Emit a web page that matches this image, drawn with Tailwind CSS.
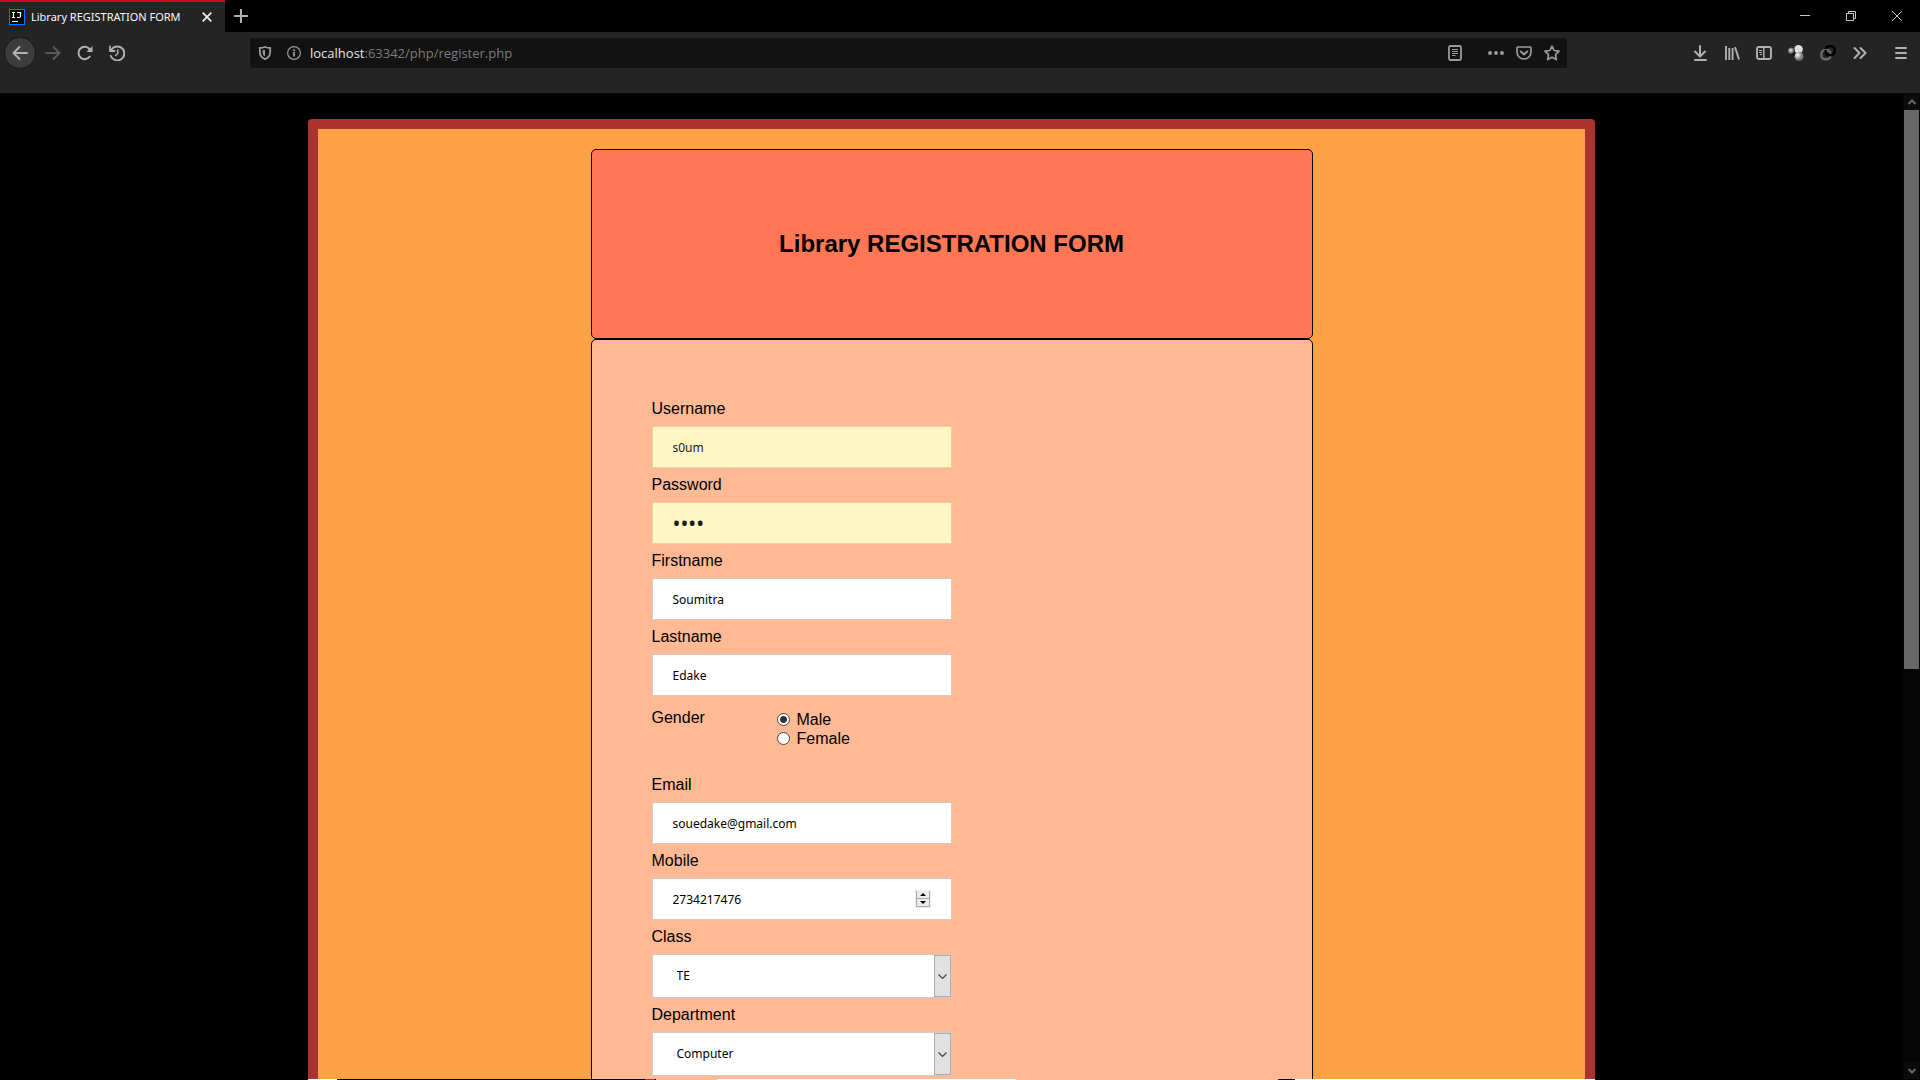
<!DOCTYPE html>
<html lang="en">
<head>
<meta charset="utf-8">
<meta name="viewport" content="width=device-width, initial-scale=1">
<title>Library REGISTRATION FORM</title>
<script src="https://cdn.jsdelivr.net/npm/@tailwindcss/browser@4"></script>
</head>
<body class="flex h-screen flex-col overflow-hidden bg-black font-['Open_Sans',sans-serif] text-[#b1b1b3]">

<!-- Tab strip and window controls -->
<header class="flex h-8 shrink-0 items-stretch bg-black">
  <div class="flex w-[225px] items-center border-t-2 border-[#d70022] bg-[#242424] pr-2 pl-[9px]">
    <svg class="size-4 shrink-0" viewBox="0 0 16 16" aria-hidden="true">
      <rect width="16" height="16" fill="#087cfa"/><rect x="1" y="1" width="14" height="14" fill="#050505"/>
      <path d="M3 3.500h3M4.500 3.500v5M3 8.500h3M8 3.500h3.500v3.500q0 1.500-1.500 1.500H8M3 12.500h6" fill="none" stroke="#fff" stroke-width="1.200"/>
    </svg>
    <span class="ml-1.5 flex-1 font-['Noto_Sans',sans-serif] text-[11px] whitespace-nowrap text-[#f9f9fa]">Library REGISTRATION FORM</span>
    <button class="flex size-5 items-center justify-center text-[#f0f0f0]" aria-label="Close tab">
      <svg class="size-2.5" viewBox="0 0 10 10" fill="none" stroke="currentColor" stroke-width="1.700"><path d="M.7.7l8.600 8.600M9.300.7L.7 9.300"/></svg>
    </button>
  </div>
  <button class="flex w-8 items-center justify-center" aria-label="New tab">
    <svg class="size-3.5" viewBox="0 0 14 14" fill="none" stroke="currentColor" stroke-width="2"><path d="M7 0v14M0 7h14"/></svg>
  </button>
  <div class="ml-auto flex text-[#c8c8c8]">
    <button class="flex w-[46px] items-center justify-center" aria-label="Minimize">
      <svg class="size-2.5" viewBox="0 0 10 10" stroke="currentColor"><path d="M0 4.500h10"/></svg>
    </button>
    <button class="flex w-[46px] items-center justify-center" aria-label="Restore">
      <svg class="size-2.5" viewBox="0 0 10 10" fill="none" stroke="currentColor"><path d="M.5 2.500h7v7h-7zM2.500 2.500v-2h7v7h-2"/></svg>
    </button>
    <button class="flex w-[46px] items-center justify-center" aria-label="Close">
      <svg class="size-2.5" viewBox="0 0 10 10" stroke="currentColor"><path d="M0 0l10 10M10 0L0 10"/></svg>
    </button>
  </div>
</header>

<!-- Navigation toolbar -->
<nav class="h-[61px] shrink-0 bg-[#242424] pt-[5px]">
  <div class="flex h-8 items-center pr-[3px] pl-1">
    <button class="mr-px flex size-8 items-center justify-center rounded-full border border-[#191919] bg-[#3d3d3d]" aria-label="Back">
      <svg class="size-4" viewBox="0 0 16 16" fill="none" stroke="currentColor" stroke-width="2" stroke-linecap="round" stroke-linejoin="round"><path d="M7.500 2L1.500 8l6 6M2 8h13"/></svg>
    </button>
    <button class="flex size-8 items-center justify-center text-[#5a5a5b]" aria-label="Forward">
      <svg class="size-4" viewBox="0 0 16 16" fill="none" stroke="currentColor" stroke-width="2" stroke-linecap="round" stroke-linejoin="round"><path d="M8.500 2l6 6-6 6M14 8H1"/></svg>
    </button>
    <button class="flex size-8 items-center justify-center" aria-label="Reload">
      <svg class="size-4" viewBox="0 0 16 16" fill="none" stroke="currentColor" stroke-width="2" stroke-linecap="round"><path d="M12.800 11.500A6.200 6.200 0 1 1 12.500 4"/><path d="M15.500 1v5.500a.5.5 0 0 1-.5.5H9.500z" fill="currentColor" stroke="none"/></svg>
    </button>
    <button class="flex size-8 items-center justify-center" aria-label="History">
      <svg class="size-4" viewBox="0 0 16 16" fill="none" stroke="currentColor" stroke-width="2" stroke-linecap="round" stroke-linejoin="round"><path d="M2.500 4.500A7 7 0 1 1 1.800 11"/><path d="M1 1.500V6h4.500" stroke-width="1.800"/><path d="M8.800 5v3.500L6.500 10.500" stroke-width="1.500"/></svg>
    </button>

    <div class="mx-[117px] flex h-[30px] flex-1 items-center rounded-xs bg-[#121212] pr-[7px] pl-2">
      <svg class="size-3.5 text-[#9a9a9b]" viewBox="0 0 14 14" fill="none" stroke="currentColor" stroke-width="1.800"><path d="M7 1Q9.500 1.800 12.200 2v4q0 5-5.200 7.200Q1.800 11 1.800 6V2Q4.500 1.800 7 1z"/><path d="M7 4v6.500Q4.500 9 4.500 6V4.200z" fill="currentColor" stroke="none"/></svg>
      <svg class="ml-[15px] size-3.5 text-[#9a9a9b]" viewBox="0 0 14 14" fill="none" stroke="currentColor" stroke-width="1.200"><circle cx="7" cy="7" r="6.400"/><path d="M7 6v4.500M7 3.200v1.800" stroke-width="1.800"/></svg>
      <div class="relative ml-[9px] flex-1">
        <div class="pointer-events-none absolute inset-0 text-[13px] leading-5 whitespace-nowrap text-[#7c7c7d]" aria-hidden="true"><span class="text-[#e6e6e8]">localhost</span>:63342/php/register.php</div>
        <input id="url" type="text" aria-label="Address" value="localhost:63342/php/register.php" class="block h-5 w-full text-[13px] text-transparent outline-none">
      </div>
      <div class="flex items-center gap-3.5 text-[#9a9a9b]">
        <button class="mr-3" aria-label="Reader view"><svg class="block h-4 w-3.5" viewBox="0 0 14 16" fill="none" stroke="currentColor"><rect x="1" y="1" width="12" height="14" rx="1.500" stroke-width="1.800"/><path d="M4 4.500h6M4 6.500h6M4 8.500h6M4 10.500h3.500"/></svg></button>
        <button aria-label="Page actions"><svg class="block size-4" viewBox="0 0 16 16" fill="currentColor"><circle cx="2" cy="8" r="2"/><circle cx="8" cy="8" r="2"/><circle cx="14" cy="8" r="2"/></svg></button>
        <button aria-label="Save to Pocket" class="-ml-0.5"><svg class="block size-4" viewBox="0 0 16 16" fill="none" stroke="currentColor" stroke-linecap="round" stroke-linejoin="round"><path d="M2 2h12q1 0 1 1v4q0 3-2 5t-5 2-5-2-2-5V3q0-1 1-1z" stroke-width="1.700"/><path d="M4.800 6.500L8 9.500l3.200-3" stroke-width="1.900"/></svg></button>
        <button aria-label="Bookmark this page" class="-ml-0.5"><svg class="block size-4" viewBox="0 0 16 16" fill="none" stroke="currentColor" stroke-width="1.700" stroke-linejoin="round"><path d="M8 1.200l2.100 4.300 4.900.7-3.500 3.400.8 5L8 12.300l-4.300 2.300.8-5L1 6.200l4.900-.7z"/></svg></button>
      </div>
    </div>

    <button class="flex size-8 items-center justify-center" aria-label="Downloads">
      <svg class="size-4" viewBox="0 0 16 16" fill="none" stroke="currentColor" stroke-width="2" stroke-linecap="round" stroke-linejoin="round"><path d="M8 1v10M3 6.500L8 11.500l5-5M3 15h11"/></svg>
    </button>
    <button class="flex size-8 items-center justify-center" aria-label="Library">
      <svg class="size-4" viewBox="0 0 16 16" fill="none" stroke="currentColor" stroke-width="1.900"><path d="M2 1v14M5.300 3v12M8.600 3v12M11 2l4 12.500"/></svg>
    </button>
    <button class="flex size-8 items-center justify-center" aria-label="Sidebars">
      <svg class="size-4" viewBox="0 0 16 16" fill="none" stroke="currentColor"><rect x="1" y="2" width="14" height="12" rx="2" stroke-width="1.900"/><path d="M7.800 2v12" stroke-width="1.500"/><path d="M3 5.500h3M3 7.500h3M4 9.500h2"/></svg>
    </button>
    <button class="flex size-8 items-center justify-center" aria-label="Molecule extension">
      <svg class="size-4" viewBox="0 0 16 16">
        <defs>
          <radialGradient id="ball" cx=".35" cy=".35"><stop offset="0" stop-color="#fff"/><stop offset="1" stop-color="#777"/></radialGradient>
          <radialGradient id="dark" cx=".4" cy=".4" r=".6"><stop offset="0" stop-color="#eee"/><stop offset="1" stop-color="#222"/></radialGradient>
        </defs>
        <circle cx="6" cy="7" r="3.500" fill="#050505"/>
        <circle cx="10.500" cy="4.300" r="4.300" fill="#e0e0e0"/><circle cx="11" cy="11.300" r="4.500" fill="url(#ball)"/><circle cx="3.500" cy="6" r="3.500" fill="url(#dark)"/>
      </svg>
    </button>
    <button class="flex size-8 items-center justify-center" aria-label="Link extension">
      <svg class="size-4" viewBox="0 0 16 16" fill="none" stroke-width="2.400"><rect x="5.500" y="1.300" width="9.200" height="8.700" rx="3.500" stroke="#000"/><rect x="1.300" y="5.300" width="9.200" height="9" rx="3.500" stroke="#69696b"/><path d="M5.500 5v1.500q0 3.500 3 3.500h3.500" stroke="#000"/></svg>
    </button>
    <button class="flex size-8 items-center justify-center" aria-label="More tools">
      <svg class="size-4" viewBox="0 0 16 16" fill="none" stroke="currentColor" stroke-width="2" stroke-linecap="round" stroke-linejoin="round"><path d="M2.500 3l5 5-5 5M8.500 3l5 5-5 5"/></svg>
    </button>
    <button class="ml-[9px] flex size-8 items-center justify-center" aria-label="Menu">
      <svg class="size-4" viewBox="0 0 16 16" stroke="currentColor" stroke-width="2" stroke-linecap="round"><path d="M3 3h10M3 8h10M3 13h10"/></svg>
    </button>
  </div>
</nav>

<!-- Page content -->
<div class="flex min-h-0 flex-1">
  <main class="flex-1 overflow-y-auto px-[308px] pt-[26px] font-['Liberation_Sans',Arial,sans-serif] text-base leading-[18px] text-black [scrollbar-width:none]">
    <div class="rounded border-[10px] border-[#ac322f] bg-[#ffa245] py-5">
      <div class="mx-auto max-w-[722px]">
        <div class="flex h-[190px] items-center justify-center rounded-[5px] border border-black bg-[#ff7755]">
          <h1 class="text-2xl font-bold">Library REGISTRATION FORM</h1>
        </div>
        <form class="rounded-[5px] border border-black bg-[#ffb995] px-15 pt-15 pb-30">
          <div class="flex w-[300px] flex-col gap-2">
            <label for="username">Username</label>
            <input id="username" type="text" value="s0um" class="h-[42px] border border-[#e2d2a2] bg-[#fff5c5] px-5 font-['Noto_Sans',sans-serif] text-xs text-[#1c1b19] outline-none">
            <label for="password">Password</label>
            <input id="password" type="password" value="pass" class="h-[42px] border border-[#e2d2a2] bg-[#fff5c5] px-5 font-['Noto_Sans',sans-serif] text-[21px] text-[#1c1b19] outline-none">
            <label for="firstname">Firstname</label>
            <input id="firstname" type="text" value="Soumitra" class="h-[42px] border border-[#cccccc] bg-white px-5 font-['Noto_Sans',sans-serif] text-xs outline-none">
            <label for="lastname">Lastname</label>
            <input id="lastname" type="text" value="Edake" class="h-[42px] border border-[#cccccc] bg-white px-5 font-['Noto_Sans',sans-serif] text-xs outline-none">

            <fieldset class="mt-[5px] mb-5 flex" aria-labelledby="gender">
              <span id="gender" class="w-[125px]">Gender</span>
              <div class="flex flex-col pt-px leading-[19px]">
                <label class="flex items-center gap-[7px]"><input type="radio" name="gender" checked class="size-[13px] appearance-none rounded-full border border-[#444] bg-white outline-none checked:bg-[radial-gradient(circle,#333_3px,#fff_4px)]">Male</label>
                <label class="flex items-center gap-[7px]"><input type="radio" name="gender" class="size-[13px] appearance-none rounded-full border border-[#444] bg-white outline-none checked:bg-[radial-gradient(circle,#333_3px,#fff_4px)]">Female</label>
              </div>
            </fieldset>

            <label for="email">Email</label>
            <input id="email" type="email" value="souedake@gmail.com" class="h-[42px] border border-[#cccccc] bg-white px-5 font-['Noto_Sans',sans-serif] text-xs outline-none">
            <label for="mobile">Mobile</label>
            <div class="relative">
              <input id="mobile" type="number" value="2734217476" class="block h-[42px] w-full [appearance:textfield] border border-[#cccccc] bg-white px-5 font-['Noto_Sans',sans-serif] text-xs outline-none">
              <svg class="pointer-events-none absolute top-3 right-[21px] h-[18px] w-4" viewBox="0 0 16 18" aria-hidden="true"><path d="M0 0h16v18H0z" fill="#ececec"/><path d="M1.500 1v15.500h13V1M1 8.500h14" fill="none" stroke="#aaa"/><path d="M5 6h6L8 3zM5 11h6l-3 3z" fill="#000"/></svg>
            </div>
            <label for="class">Class</label>
            <div class="relative">
              <select id="class" class="block h-11 w-full appearance-none border border-[#cccccc] bg-white px-6 font-['Noto_Sans',sans-serif] text-xs outline-none"><option>TE</option></select>
              <span class="pointer-events-none absolute inset-y-px right-px flex w-[17px] items-center justify-center border border-[#adadad] bg-[#e1e1e1]"><svg class="h-[5px] w-[9px]" viewBox="0 0 9 5" fill="none" stroke="#444" stroke-width="1.200"><path d="M.5.5l4 4 4-4"/></svg></span>
            </div>
            <label for="department">Department</label>
            <div class="relative">
              <select id="department" class="block h-11 w-full appearance-none border border-[#cccccc] bg-white px-6 font-['Noto_Sans',sans-serif] text-xs outline-none"><option>Computer</option></select>
              <span class="pointer-events-none absolute inset-y-px right-px flex w-[17px] items-center justify-center border border-[#adadad] bg-[#e1e1e1]"><svg class="h-[5px] w-[9px]" viewBox="0 0 9 5" fill="none" stroke="#444" stroke-width="1.200"><path d="M.5.5l4 4 4-4"/></svg></span>
            </div>
          </div>
        </form>
      </div>
    </div>
  </main>

  <!-- Scrollbar -->
  <div class="flex w-[17px] shrink-0 flex-col bg-[#050506] pr-px pl-px text-[#666]" aria-hidden="true">
    <div class="flex h-[17px] items-center justify-center bg-[#0b0b0c]"><svg class="h-1.5 w-2" viewBox="0 0 8 6" fill="none" stroke="currentColor" stroke-width="2"><path d="M.5 5L4 1.500 7.500 5"/></svg></div>
    <div class="h-[559px] bg-[#686868]"></div>
    <div class="mt-auto flex h-[17px] items-center justify-center bg-[#0b0b0c]"><svg class="h-1.5 w-2" viewBox="0 0 8 6" fill="none" stroke="currentColor" stroke-width="2"><path d="M.5 1L4 4.500 7.500 1"/></svg></div>
  </div>
</div>

<!-- Edge of the auto-hidden taskbar -->
<footer class="flex h-px shrink-0 bg-black">
  <div class="ml-[308px] w-[29px] bg-white"></div>
  <div class="w-[308px]"></div>
  <div class="w-[10px] bg-[#ac322f]"></div>
  <div class="w-px"></div>
  <div class="w-[61px] bg-[#ffb995]"></div>
  <div class="w-[299px] bg-white"></div>
  <div class="w-[262px] bg-[#ffb995]"></div>
  <div class="w-[17px]"></div>
  <div class="w-[300px] bg-white"></div>
</footer>
</body>
</html>
